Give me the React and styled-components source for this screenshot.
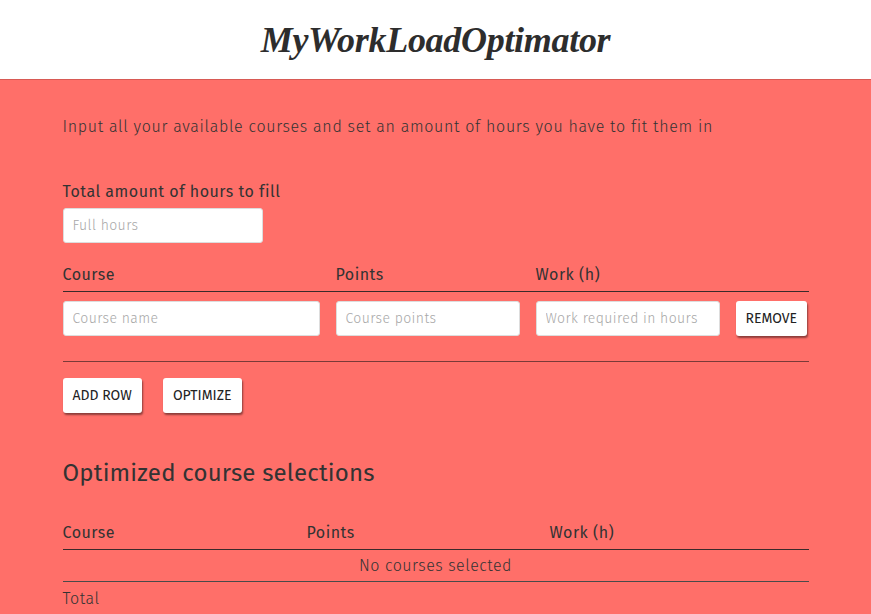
import React from 'react';
import styled, { createGlobalStyle } from 'styled-components';

const GlobalStyle = createGlobalStyle`
  html, body {
    margin: 0;
    padding: 0;
    background: #ff6f69;
    font-family: "Fira Sans", Roboto, "Noto Sans", sans-serif;
    color: #333;
  }
`;

const Header = styled.header`
  background: #fff;
  height: 80px;
  border-bottom: 1px solid #d85a55;
  box-sizing: border-box;
  display: flex;
  align-items: center;
  justify-content: center;
`;

const Title = styled.h1`
  margin: 0;
  font-family: "Liberation Serif", "DejaVu Serif", serif;
  font-style: italic;
  font-weight: 700;
  font-size: 36px;
  color: #2d2d2d;
  letter-spacing: -0.3px;
`;

const Main = styled.main`
  max-width: 746px;
  margin: 0 auto;
  padding-top: 36px;
`;

const Intro = styled.p`
  margin: 0 0 43px;
  font-size: 16px;
  font-weight: 300;
  letter-spacing: 0.68px;
  line-height: 22px;
`;

const Label = styled.label`
  display: block;
  font-size: 16px;
  font-weight: 400;
  letter-spacing: 0.5px;
  line-height: 22px;
  margin-bottom: 5px;
`;

const Input = styled.input`
  box-sizing: border-box;
  width: ${({ w }) => w || '100%'};
  height: 35px;
  border: 1px solid #ddd;
  border-radius: 3px;
  background: #fff;
  padding: 0 9px;
  font-family: inherit;
  font-size: 14px;
  font-weight: 300;
  letter-spacing: 0.4px;
  color: #333;
  outline: none;
  &::placeholder {
    color: #a8a8a8;
  }
`;

const Grid = styled.div`
  display: grid;
  grid-template-columns: 257px 184px 184px 71px;
  column-gap: 16px;
  align-items: center;
`;

const HeadRow = styled(Grid)`
  margin-top: 21px;
  padding-bottom: 5px;
  border-bottom: 1px solid #3a2a2a;
  font-size: 16px;
  font-weight: 400;
  letter-spacing: 0.5px;
  line-height: 22px;
`;

const InputRow = styled(Grid)`
  padding: 9px 0 25px;
  border-bottom: 1px solid #7a3a38;
`;

const Button = styled.button`
  box-sizing: border-box;
  height: 35px;
  padding: 0 10px;
  background: #fff;
  border: none;
  border-radius: 3px;
  box-shadow: 1px 2px 2px rgba(0, 0, 0, 0.45);
  font-family: inherit;
  font-size: 14px;
  font-weight: 400;
  letter-spacing: 0;
  color: #222;
  text-transform: uppercase;
  cursor: pointer;
`;

const Actions = styled.div`
  display: flex;
  gap: 21px;
  margin-top: 16px;
`;

const SubTitle = styled.h2`
  margin: 46px 0 35px;
  font-size: 24px;
  font-weight: 400;
  letter-spacing: 0.2px;
  line-height: 28px;
`;

const Table = styled.table`
  width: 100%;
  border-collapse: collapse;
  font-size: 16px;
  letter-spacing: 0.5px;
  th {
    text-align: left;
    font-weight: 400;
    padding: 0 0 5px;
    line-height: 22px;
    border-bottom: 1px solid #3a2a2a;
  }
  td {
    padding: 5px 0 4px;
    line-height: 22px;
    font-weight: 300;
  }
`;

const EmptyCell = styled.td`
  text-align: center;
  border-bottom: 1px solid #4a4a4a;
`;

const TotalCell = styled.td`
  && {
    padding-top: 6px;
  }
`;

const App = () => {
  return (
    <>
      <GlobalStyle />
      <Header>
        <Title>MyWorkLoadOptimator</Title>
      </Header>
      <Main>
        <Intro>
          Input all your available courses and set an amount of hours you have to fit them in
        </Intro>
        <Label htmlFor="hours">Total amount of hours to fill</Label>
        <Input id="hours" w="200px" placeholder="Full hours" />
        <HeadRow>
          <span>Course</span>
          <span>Points</span>
          <span>Work (h)</span>
        </HeadRow>
        <InputRow>
          <Input placeholder="Course name" />
          <Input placeholder="Course points" />
          <Input placeholder="Work required in hours" />
          <Button>Remove</Button>
        </InputRow>
        <Actions>
          <Button>Add row</Button>
          <Button>Optimize</Button>
        </Actions>
        <SubTitle>Optimized course selections</SubTitle>
        <Table>
          <thead>
            <tr>
              <th style={{ width: '244px' }}>Course</th>
              <th style={{ width: '243px' }}>Points</th>
              <th>Work (h)</th>
            </tr>
          </thead>
          <tbody>
            <tr>
              <EmptyCell colSpan={3}>No courses selected</EmptyCell>
            </tr>
            <tr>
              <TotalCell>Total</TotalCell>
              <td />
              <td />
            </tr>
          </tbody>
        </Table>
      </Main>
    </>
  );
};

export default App;
